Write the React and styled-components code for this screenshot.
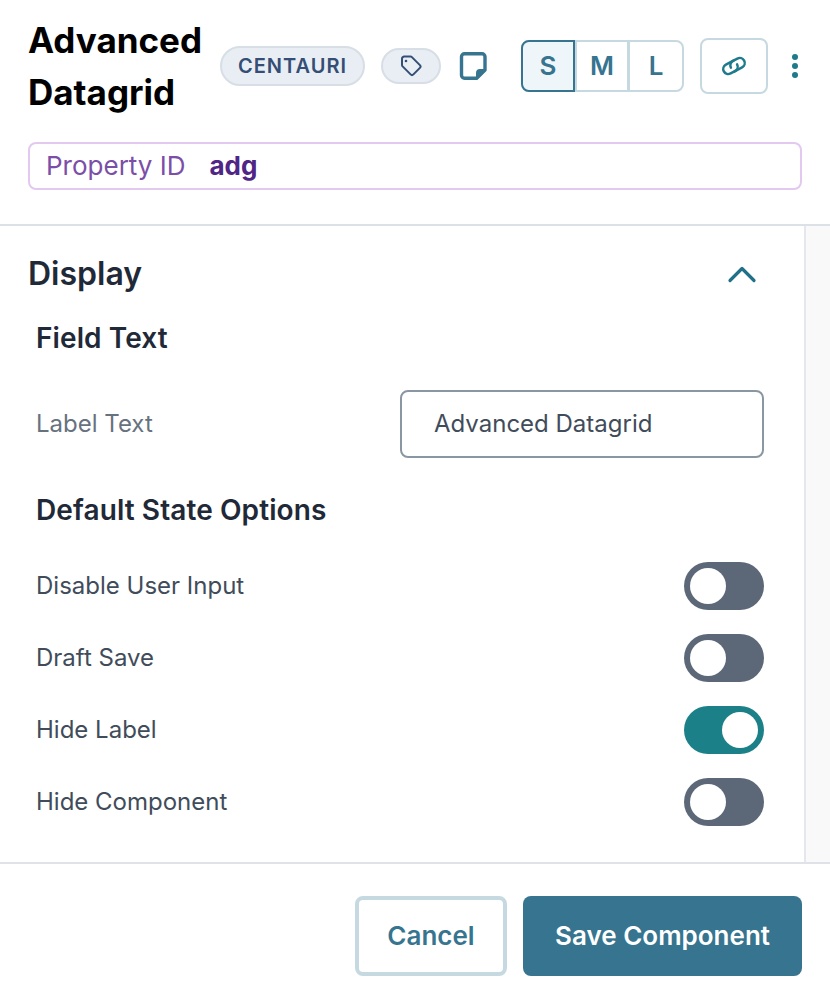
import React from "react";
import styled, { createGlobalStyle } from "styled-components";

const Global = createGlobalStyle`
  html, body { margin: 0; padding: 0; background: #fff; }
  * { box-sizing: border-box; }
  body { font-family: Inter, "Liberation Sans", sans-serif; }
`;

const Page = styled.div`
  width: 830px;
  height: 992px;
  display: flex;
  flex-direction: column;
  overflow: hidden;
  background: #fff;
`;

const Header = styled.header`
  height: 226px;
  flex: none;
  padding: 14px 28px 0 28px;
  border-bottom: 2px solid #dbe1e7;
`;

const TitleRow = styled.div`
  display: flex;
  align-items: center;
  height: 104px;
`;

const Title = styled.h1`
  margin: 0;
  width: 192px;
  flex: none;
  font-size: 35px;
  line-height: 52px;
  font-weight: 700;
  color: #000;
`;

const Pill = styled.span`
  display: flex;
  align-items: center;
  justify-content: center;
  height: ${(p) => p.$h}px;
  width: ${(p) => p.$w}px;
  margin-right: ${(p) => p.$mr}px;
  flex: none;
  border-radius: 20px;
  border: 2px solid #d7dee6;
  background: #e9eef4;
  color: #344e75;
  font-size: 20px;
  font-weight: 600;
  letter-spacing: 1px;
`;

const NoteButton = styled.span`
  display: flex;
  width: 30px;
  height: 30px;
  flex: none;
  margin-right: 33px;
`;

const SizeGroup = styled.div`
  display: flex;
  width: 163px;
  height: 52px;
  flex: none;
  margin-right: 16px;
  border: 2px solid #c6d9e1;
  border-radius: 8px;
`;

const SizeButton = styled.span`
  display: flex;
  align-items: center;
  justify-content: center;
  flex: ${(p) => p.$grow};
  padding-bottom: 2px;
  margin: ${(p) => (p.$active ? "-2px 0 -2px -2px" : "0")};
  border-radius: ${(p) => (p.$active ? "8px 0 0 8px" : "0")};
  border: ${(p) => (p.$active ? "2px solid #36748f" : "none")};
  border-left: ${(p) => (p.$active ? "2px solid #36748f" : p.$first ? "2px solid #c6d9e1" : "3px solid #c6d9e1")};
  background: ${(p) => (p.$active ? "#eff6fa" : "transparent")};
  color: #36748f;
  font-size: 26px;
  font-weight: 600;
`;

const LinkButton = styled.span`
  display: flex;
  align-items: center;
  justify-content: center;
  width: 68px;
  height: 56px;
  flex: none;
  margin-right: 24px;
  border: 2px solid #c6d9e1;
  border-radius: 8px;
  color: #1f7a8c;
`;

const Kebab = styled.span`
  display: flex;
  flex-direction: column;
  gap: 3px;
  flex: none;
`;

const Dot = styled.i`
  display: block;
  width: 6px;
  height: 6px;
  border-radius: 50%;
  background: #1f7a8c;
`;

const PropertyBar = styled.div`
  display: flex;
  align-items: center;
  gap: 24px;
  height: 48px;
  margin-top: 24px;
  width: 774px;
  padding: 0 0 2px 16px;
  border: 2px solid #e3c8f0;
  border-radius: 8px;
  font-size: 26px;
  color: #7b4ea8;
`;

const PropertyValue = styled.span`
  font-weight: 700;
  color: #4f2585;
`;

const Body = styled.div`
  flex: 1;
  display: flex;
  background: #f9f9fa;
  min-height: 0;
`;

const Panel = styled.section`
  width: 806px;
  background: #fff;
  border-right: 2px solid #e4e7eb;
  padding: 0 40px 0 28px;
`;

const SectionHead = styled.div`
  display: flex;
  align-items: center;
  justify-content: space-between;
  height: 95px;
`;

const SectionTitle = styled.h2`
  margin: 0;
  font-size: 32px;
  font-weight: 600;
  color: #1f2937;
`;

const Chevron = styled.svg`
  width: 32px;
  height: 20px;
  margin-right: 6px;
  color: #1f7088;
`;

const Group = styled.div`
  padding-left: 8px;
`;

const GroupTitle = styled.h3`
  margin: 0;
  font-size: 28px;
  line-height: 34px;
  letter-spacing: 0.1px;
  font-weight: 600;
  color: #1f2937;
`;

const LabelRow = styled.div`
  display: flex;
  align-items: center;
  justify-content: space-between;
  height: 68px;
  margin: 35px 0 35px;
`;

const Muted = styled.span`
  padding-bottom: 2px;
  font-size: 24px;
  color: #67727f;
`;

const TextInput = styled.div`
  display: flex;
  align-items: center;
  width: 364px;
  height: 68px;
  padding: 0 0 2px 32px;
  border: 2px solid #8b96a3;
  border-radius: 8px;
  font-size: 24px;
  color: #414c5b;
`;

const Toggles = styled.div`
  display: flex;
  flex-direction: column;
  gap: 24px;
  margin-top: 35px;
`;

const ToggleRow = styled.div`
  display: flex;
  align-items: center;
  justify-content: space-between;
  height: 48px;
`;

const ToggleLabel = styled.span`
  padding-bottom: 2px;
  font-size: 24px;
  color: #414c5b;
`;

const Toggle = styled.span`
  display: flex;
  justify-content: ${(p) => (p.$on ? "flex-end" : "flex-start")};
  align-items: center;
  width: 80px;
  height: 48px;
  padding: 0 6px;
  border-radius: 24px;
  background: ${(p) => (p.$on ? "#1c8088" : "#5c6878")};
`;

const Knob = styled.i`
  display: block;
  width: 36px;
  height: 36px;
  border-radius: 50%;
  background: #fff;
`;

const Footer = styled.footer`
  height: 130px;
  flex: none;
  display: flex;
  justify-content: flex-end;
  gap: 16px;
  padding: 32px 28px 0 0;
  border-top: 2px solid #dfe3e8;
`;

const Cancel = styled.button`
  width: 152px;
  height: 80px;
  padding: 0 0 2px;
  border: 4px solid #c6d9e1;
  border-radius: 8px;
  background: #fff;
  color: #36748f;
  font: 600 26px Inter, sans-serif;
`;

const Save = styled.button`
  width: 279px;
  height: 80px;
  padding: 0 0 2px;
  border: none;
  border-radius: 8px;
  background: #36748f;
  color: #fff;
  font: 600 26px Inter, sans-serif;
`;

const toggles = [
  ["Disable User Input", false],
  ["Draft Save", false],
  ["Hide Label", true],
  ["Hide Component", false],
];

export default function App() {
  return (
    <Page>
      <Global />
      <Header>
        <TitleRow>
          <Title>Advanced Datagrid</Title>
          <Pill $w={145} $h={40} $mr={16}>CENTAURI</Pill>
          <Pill $w={60} $h={36} $mr={17}>
            <svg width="22" height="22" viewBox="0 0 22 22" fill="none" stroke="currentColor" strokeWidth="2" strokeLinejoin="round">
              <path d="M4 1.500h6.500a2 2 0 0 1 1.400.600l8 8a2 2 0 0 1 0 2.800l-6.500 6.500a2 2 0 0 1-2.800 0l-8-8a2 2 0 0 1-.6-1.400V4A2.500 2.500 0 0 1 4 1.500z" />
              <circle cx="6" cy="6" r="1.300" fill="currentColor" stroke="none" />
            </svg>
          </Pill>
          <NoteButton>
            <svg width="30" height="30" viewBox="0 0 30 30" fill="none">
              <path d="M6.500 2.700h17.500a3 3 0 0 1 3 3V19l-8.300 8.300H6.500a3 3 0 0 1-3-3V5.700a3 3 0 0 1 3-3z" stroke="#36748f" strokeWidth="3.400" strokeLinejoin="round" />
              <path d="M19 27v-5a3 3 0 0 1 3-3h5z" fill="#36748f" stroke="#36748f" strokeWidth="2" strokeLinejoin="round" />
            </svg>
          </NoteButton>
          <SizeGroup>
            <SizeButton $active $grow="0 0 54px">S</SizeButton>
            <SizeButton $first $grow="0 0 52px">M</SizeButton>
            <SizeButton $grow="1">L</SizeButton>
          </SizeGroup>
          <LinkButton>
            <svg width="30" height="24" viewBox="0 0 30 24" fill="none" stroke="currentColor" strokeWidth="2.500" strokeLinecap="round">
              <g transform="translate(15 12) rotate(-28)">
                <path d="M2 -5H-6.500A5 5 0 0 0 -6.500 5H-1.500A5 5 0 0 0 3.500 0" />
                <path d="M-2 5H6.500A5 5 0 0 0 6.500 -5H1.500A5 5 0 0 0 -3.500 0" />
              </g>
            </svg>
          </LinkButton>
          <Kebab><Dot /><Dot /><Dot /></Kebab>
        </TitleRow>
        <PropertyBar>
          Property ID
          <PropertyValue>adg</PropertyValue>
        </PropertyBar>
      </Header>
      <Body>
        <Panel>
          <SectionHead>
            <SectionTitle>Display</SectionTitle>
            <Chevron viewBox="0 0 32 20" fill="none">
              <path d="M4 16.500L16 4.500l12 12" stroke="currentColor" strokeWidth="3.200" strokeLinecap="round" strokeLinejoin="round" />
            </Chevron>
          </SectionHead>
          <Group>
            <GroupTitle>Field Text</GroupTitle>
            <LabelRow>
              <Muted>Label Text</Muted>
              <TextInput>Advanced Datagrid</TextInput>
            </LabelRow>
            <GroupTitle>Default State Options</GroupTitle>
            <Toggles>
              {toggles.map(([label, on]) => (
                <ToggleRow key={label}>
                  <ToggleLabel>{label}</ToggleLabel>
                  <Toggle $on={on}><Knob /></Toggle>
                </ToggleRow>
              ))}
            </Toggles>
          </Group>
        </Panel>
      </Body>
      <Footer>
        <Cancel>Cancel</Cancel>
        <Save>Save Component</Save>
      </Footer>
    </Page>
  );
}
